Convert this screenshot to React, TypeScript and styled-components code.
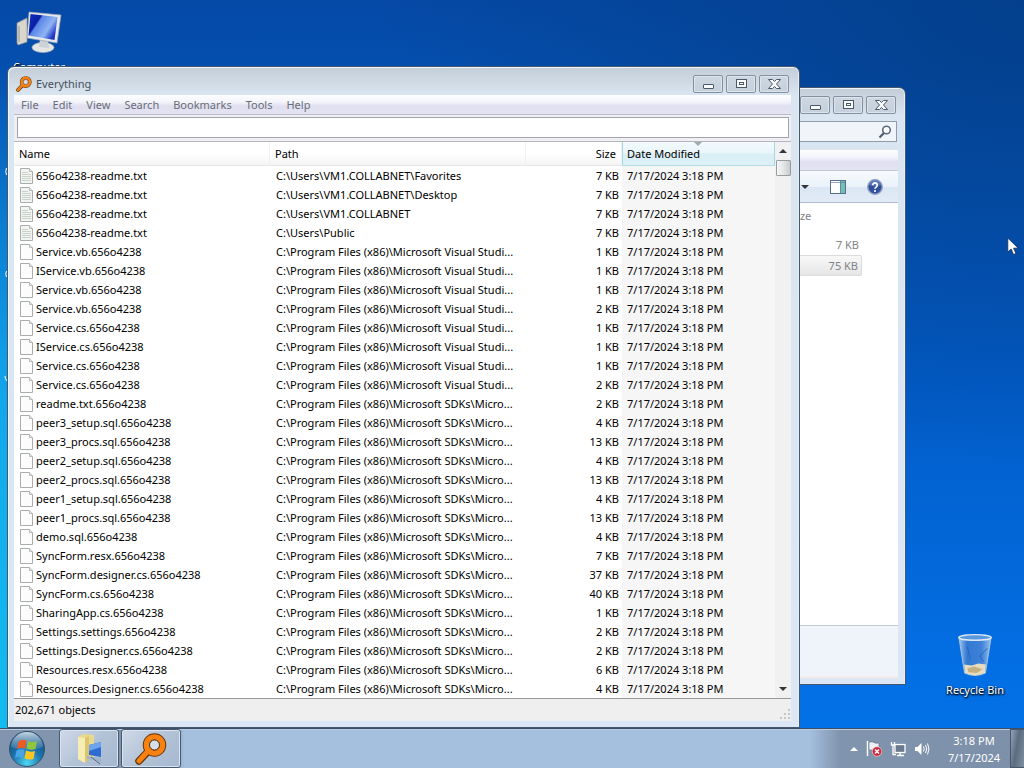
import React from "react";
import styled, { createGlobalStyle, css } from "styled-components";

const FONT = '"Noto Sans", "Open Sans", sans-serif';

const GlobalStyle = createGlobalStyle`
  *, *::before, *::after { box-sizing: border-box; }
  body {
    margin: 0;
    font: 11px/16px ${FONT};
    color: #000;
    background: #0560c8;
  }
  button, input { font: inherit; color: inherit; }
  button { border: 0; padding: 0; background: none; }
`;

/* ---------- desktop ---------- */

const Screen = styled.div`
  display: flex;
  flex-direction: column;
  height: 100vh;
  overflow: hidden;
`;

const Desktop = styled.main`
  position: relative;
  flex: 1;
  background:
    radial-gradient(ellipse 6% 90% at 0 100%, #12bdf0 0%, #12a8ec 50%, rgba(16, 150, 235, 0) 100%),
    radial-gradient(ellipse at 100% 0%, #033f8c 0%, rgba(3, 63, 140, 0) 45%),
    linear-gradient(180deg, #0549a6 0%, #0553b3 15%, #025bc6 50%, #036fe4 92%, #0270e6 100%);
`;

const Shortcut = styled.button<{ $x: string; $y: string }>`
  position: absolute;
  left: ${(p) => p.$x};
  top: ${(p) => p.$y};
  display: flex;
  flex-direction: column;
  align-items: center;
  width: 72px;
  gap: 2px;
  color: #fff;
  text-shadow: 0 1px 2px #000, 1px 1px 2px #000;
`;

const Specks = styled.svg`
  position: absolute;
  left: 3px;
  top: 165px;
`;

const Pointer = styled.svg`
  position: absolute;
  left: 1007px;
  top: 237px;
`;

/* ---------- window chrome ---------- */

const WindowFrame = styled.section`
  position: absolute;
  display: flex;
  flex-direction: column;
  border: 1px solid #46586c;
  border-radius: 7px 7px 0 0;
  padding: 0 7px 6px 6px;
  background: linear-gradient(180deg, #c4ced9 0, #ced9e4 14px, #d9e5f0 28px, #dbe7f5 100%);
  box-shadow: inset 1px 1px 0 #eef5fb, inset -1px 0 0 #e4eef8;
`;

const EverythingFrame = styled(WindowFrame)`
  left: 7px;
  right: 224px;
  top: 66px;
  padding-right: 8px;
`;

const ExplorerFrame = styled(WindowFrame)`
  left: 180px;
  right: 118px;
  top: 87px;
  bottom: 43px;
`;

const TitleBar = styled.header<{ $tall?: boolean }>`
  display: flex;
  align-items: center;
  gap: 4px;
  height: ${(p) => (p.$tall ? 32 : 28)}px;
  padding: ${(p) => (p.$tall ? 2 : 5)}px 2px 0 2px;
`;

const Title = styled.h1`
  flex: 1;
  margin: 0;
  font-size: 11px;
  font-weight: 400;
  color: #46505c;
`;

const Captions = styled.div`
  display: flex;
  gap: 3px;
`;

const CaptionButton = styled.button`
  display: grid;
  place-items: center;
  width: 30px;
  height: 18px;
  border: 1px solid #8290a2;
  border-radius: 2px;
  background: linear-gradient(180deg, #ced7e1, #c5d0dc);
  box-shadow: inset 0 0 0 1px #dce4ec;
`;

const Band = css`
  background: linear-gradient(180deg, #fdfdff 0, #f4f5fb 35%, #dfdff0 60%, #e4e3f2 100%);
`;

/* ---------- Everything ---------- */

const MenuBar = styled.nav`
  ${Band}
  display: flex;
  gap: 14px;
  height: 20px;
  padding: 1px 7px 0;
  border-bottom: 1px solid #bcbcc8;
`;

const MenuItem = styled.button`
  color: #6a6d78;
  line-height: 18px;
`;

const SearchStrip = styled.form`
  display: flex;
  padding: 2px 2px 3px 3px;
  background: #f0f0f4;
  border-bottom: 1px solid #b4b6bc;
`;

const SearchInput = styled.input`
  flex: 1;
  height: 21px;
  min-width: 0;
  border: 1px solid #a3a3b0;
  background: #fff;
  padding: 0 4px;
  outline: 0;
`;

const ListArea = styled.div`
  display: flex;
  background: #fff;
  border-bottom: 1px solid #96989c;
`;

const ResultTable = styled.table`
  flex: 1;
  table-layout: fixed;
  width: 100%;
  border-collapse: separate;
  border-spacing: 0;
`;

const Col = styled.col<{ $w?: number }>`
  width: ${(p) => (p.$w ? `${p.$w}px` : "auto")};
`;

const HeadCell = styled.th<{ $right?: boolean; $sorted?: boolean }>`
  position: relative;
  height: 24px;
  padding: 0 5px;
  font-weight: 400;
  text-align: ${(p) => (p.$right ? "right" : "left")};
  border-right: 1px solid ${(p) => (p.$sorted ? "#a8d6e2" : "#f0f1f2")};
  border-bottom: 1px solid ${(p) => (p.$sorted ? "#b4dde8" : "#e6e7ea")};
  background: ${(p) =>
    p.$sorted
      ? "linear-gradient(180deg, #f3fafc 0, #eaf6fa 45%, #d9eff5 55%, #dcf0f6 100%)"
      : "linear-gradient(180deg, #fff 50%, #f4f4f5 100%)"};
  ${(p) => p.$sorted && "box-shadow: inset 1px 0 0 #a8d6e2;"}
`;

const SortMark = styled.svg`
  position: absolute;
  left: 72px;
  top: 0;
`;

const Cell = styled.td<{ $right?: boolean; $sorted?: boolean }>`
  height: 19px;
  padding: 0 ${(p) => (p.$right ? 3 : 2)}px 0 ${(p) => (p.$sorted ? 5 : 6)}px;
  line-height: 18px;
  white-space: nowrap;
  text-align: ${(p) => (p.$right ? "right" : "left")};
  background: ${(p) => (p.$sorted ? "#f6f6f6" : "transparent")};
`;

const FileName = styled.div`
  display: flex;
  align-items: center;
  gap: 2px;
`;

const ScrollBar = styled.div`
  display: flex;
  flex-direction: column;
  width: 16px;
  background: #f1f1f2;
`;

const ScrollButton = styled.button`
  display: grid;
  place-items: center;
  height: 18px;
`;

const Thumb = styled.div`
  height: 16px;
  margin: 0 0 0 1px;
  border: 1px solid #999da2;
  border-radius: 1px;
  background: linear-gradient(90deg, #f6f6f6, #e4e5e6 50%, #c9cacc);
`;

const Track = styled.div`
  flex: 1;
`;

const StatusBar = styled.footer`
  display: flex;
  align-items: center;
  justify-content: space-between;
  height: 22px;
  padding: 0 1px;
  background: #f0eff0;
`;

/* ---------- Explorer ---------- */

const AddressBar = styled.div`
  display: flex;
  justify-content: flex-end;
  padding: 1px 1px 8px;
`;

const SearchBox = styled.label`
  display: flex;
  align-items: center;
  width: 180px;
  height: 21px;
  padding-right: 4px;
  border: 1px solid #8f9cab;
  background: #f1f5fa;
`;

const PlainInput = styled.input`
  flex: 1;
  min-width: 0;
  border: 0;
  outline: 0;
  background: transparent;
`;

const MenuBand = styled.div`
  ${Band}
  height: 21px;
  border-bottom: 1px solid #c3c7d3;
`;

const CommandBar = styled.div`
  display: flex;
  align-items: center;
  justify-content: flex-end;
  gap: 21px;
  height: 32px;
  padding-right: 15px;
  border-bottom: 1px solid #adbdd2;
  background: linear-gradient(180deg, #f8fbfe 0, #eaf1f9 50%, #dae6f3 52%, #e1ecf7 100%);
`;

const CommandButton = styled.button`
  display: grid;
  place-items: center;
`;

const FilePane = styled.div`
  flex: 1;
  background: #fff;
  padding-right: 36px;
`;

const FileTable = styled.table`
  width: 100%;
  table-layout: fixed;
  border-collapse: separate;
  border-spacing: 0;
  color: #808388;
`;

const FileHead = styled.th`
  height: 31px;
  padding: 0 0 5px 9px;
  font-weight: 400;
  text-align: left;
`;

const FileCell = styled.td<{ $selected?: boolean }>`
  height: 21px;
  padding: 0 3px;
  text-align: right;
  ${(p) =>
    p.$selected &&
    css`
      border: 1px solid #dcdcdc;
      border-left: 0;
      border-radius: 0 2px 2px 0;
      background: linear-gradient(180deg, #f8f8f8, #e6e6e6);
    `}
`;

const DetailsPane = styled.footer`
  height: 53px;
  border-top: 1px solid #c4cbd4;
  border-bottom: 2px solid #f7ebe9;
  background: #eff4fa;
`;

/* ---------- taskbar ---------- */

const Taskbar = styled.nav`
  display: flex;
  align-items: stretch;
  height: 40px;
  border-top: 1px solid #3c4f66;
  box-shadow: inset 0 1px 0 #b9cbde;
  background: linear-gradient(90deg, #8295ae 0, #8295ae 17%, #a5c0de 18%, #a5c0de 79%, #8094ae 82%, #7d90aa 100%);
`;

const StartButton = styled.button`
  display: grid;
  place-items: center;
  width: 54px;
  margin-right: 5px;
`;

const TaskButton = styled.button`
  display: grid;
  place-items: center;
  width: 60px;
  margin-right: 2px;
  border: 1px solid #48596f;
  border-radius: 3px;
  background: linear-gradient(135deg, #cfdae8 0, #b3c3d7 50%, #a5b8d0 100%);
  box-shadow: inset 0 0 0 1px #d9e4f0;
`;

const Tray = styled.div`
  display: flex;
  align-items: center;
  gap: 8px;
  margin-left: auto;
`;

const TrayButton = styled.button`
  display: grid;
  place-items: center;
`;

const Clock = styled.time`
  width: 72px;
  color: #fff;
  line-height: 17px;
  text-align: center;
  white-space: pre-line;
`;

const ShowDesktop = styled.button`
  width: 14px;
  border: 1px solid #46566b;
  border-right: 0;
  background: linear-gradient(100deg, #93a3b7 0, #5c6c80 45%, #7f8fa4 100%);
`;

/* ---------- drawings ---------- */

const ComputerIcon = () => (
  <svg width="48" height="46" viewBox="0 0 48 46" aria-hidden>
    <defs>
      <linearGradient id="monitor" x1="0" y1="0" x2="1" y2="0.6">
        <stop offset="0" stopColor="#0f2fc0" />
        <stop offset="0.35" stopColor="#0a1fa4" />
        <stop offset="0.4" stopColor="#5a86e6" />
        <stop offset="0.75" stopColor="#8fb4f4" />
        <stop offset="1" stopColor="#1c35c4" />
      </linearGradient>
    </defs>
    <path d="M2 12 12 7v24l-9 3-1-2z" fill="#d9d6cc" stroke="#8f9098" strokeWidth=".7" />
    <path d="M4 15v16" stroke="#9a988f" />
    <ellipse cx="28" cy="36.500" rx="11" ry="5" fill="#e4e6e6" stroke="#a8b0bb" strokeWidth=".7" />
    <path d="m25 28 8 1 1 8-10-1z" fill="#cdd2d6" />
    <path d="m14 1 32 3-4 28-30-5z" fill="#e6e9ec" stroke="#9aa3b3" strokeWidth=".7" />
    <path d="m15.500 3 27 3-3 23-26-4.500z" fill="url(#monitor)" />
  </svg>
);

const BinIcon = () => (
  <svg width="38" height="48" viewBox="0 0 40 48" aria-hidden>
    <defs>
      <linearGradient id="glass" x1="0" y1="0" x2="1" y2="0">
        <stop offset="0" stopColor="#b9d6f2" stopOpacity=".9" />
        <stop offset=".25" stopColor="#3f7cce" stopOpacity=".8" />
        <stop offset=".7" stopColor="#4c86d6" stopOpacity=".8" />
        <stop offset="1" stopColor="#a9cdf0" stopOpacity=".9" />
      </linearGradient>
    </defs>
    <path d="M3 4 9 42q11 5 22 0L37 4z" fill="url(#glass)" stroke="#a9c4e2" />
    <path d="m8.500 33 1 9q10.500 5 21 0l1-9-8-1-7 2z" fill="#e6dcc0" />
    <path d="m12 37 7-2 9 3-6 4-9-1z" fill="#c4b183" />
    <ellipse cx="20" cy="4.500" rx="17" ry="3" fill="#5a97dd" stroke="#dbe8f5" strokeWidth="1.500" />
    <path d="m33 16-8 8 4 6M12 14l3 14" fill="none" stroke="#2c62b4" />
  </svg>
);

const Loupe = ({ size }: { size: number }) => (
  <svg width={size} height={size} viewBox="0 0 32 32" aria-hidden>
    <path d="m4 28 9.500-10" stroke="#5e3208" strokeWidth="7.500" strokeLinecap="round" />
    <circle cx="19.500" cy="12" r="8.500" fill="none" stroke="#5e3208" strokeWidth="6.500" />
    <path d="m4 28 10-11" stroke="#f98112" strokeWidth="5" strokeLinecap="round" />
    <circle cx="19.500" cy="12" r="8.200" fill="none" stroke="#f98112" strokeWidth="5.200" />
    <circle cx="19.500" cy="12" r="5" fill="#d5dfea" stroke="#5e3208" />
  </svg>
);

const FileIcon = ({ lined }: { lined?: boolean }) => (
  <svg width="14" height="16" viewBox="0 0 14 16" aria-hidden>
    <path d="M.5.5h9l3 3v12H.5z" fill={lined ? "#f1f4f1" : "#fcfcfc"} stroke="#aaadad" />
    <path d="M9.500.5v3h3" fill="#e7e9e9" stroke="#b8bbbb" />
    {lined && <path d="M2 4.500h6M2 6.500h9M2 8.500h9M2 10.500h9M2 12.500h9" stroke="#c9d3ca" />}
  </svg>
);

const glyphs = {
  Minimize: <rect x="3.500" y="7.500" width="10" height="4" rx=".5" fill="#f7f9fb" stroke="#4b5868" />,
  Maximize: (
    <>
      <rect x="3.500" y="2.500" width="10" height="8" fill="#f7f9fb" stroke="#4b5868" />
      <rect x="6.500" y="5.500" width="4" height="2" fill="#f7f9fb" stroke="#4b5868" />
    </>
  ),
  Close: (
    <path
      d="M2.500 2.500h4l2 2 2-2h4l-4 4.500 4 4.500h-4l-2-2-2 2h-4l4-4.500z"
      fill="#f7f9fb"
      stroke="#4b5868"
    />
  ),
};

const CaptionButtons = () => (
  <Captions>
    {(Object.keys(glyphs) as (keyof typeof glyphs)[]).map((name) => (
      <CaptionButton key={name} aria-label={name}>
        <svg width="17" height="14" viewBox="0 0 17 14" aria-hidden>
          {glyphs[name]}
        </svg>
      </CaptionButton>
    ))}
  </Captions>
);

const Arrow = ({ up }: { up?: boolean }) => (
  <svg width="8" height="4" viewBox="0 0 8 4" aria-hidden>
    <path d={up ? "M0 4 4 0l4 4z" : "M0 0h8L4 4z"} fill="#32363c" />
  </svg>
);

const MagnifierIcon = () => (
  <svg width="14" height="14" viewBox="0 0 14 14" aria-hidden>
    <circle cx="8.500" cy="5" r="3.800" fill="#fff" stroke="#5b6c80" strokeWidth="1.600" />
    <path d="M6 8 1.500 12.500" stroke="#4b5c70" strokeWidth="2.200" />
  </svg>
);

const PreviewIcon = () => (
  <svg width="16" height="14" viewBox="0 0 16 14" aria-hidden>
    <rect x=".5" y=".5" width="15" height="13" fill="#fff" stroke="#56708a" />
    <rect x="10" y="1" width="5" height="12" fill="#74bdb9" />
    <path d="M10.500 1v12M1 2.500h14" stroke="#56708a" strokeOpacity=".6" />
  </svg>
);

const HelpIcon = () => (
  <svg width="16" height="16" viewBox="0 0 16 16" aria-hidden>
    <circle cx="8" cy="8" r="7.200" fill="#2f4f9e" stroke="#8a99ba" strokeWidth="1.400" />
    <path d="M2 6a6 5 0 0 1 12 0q-6 2-12 0" fill="#6d89c8" opacity=".7" />
    <path d="M5.700 6.200a2.300 2.200 0 1 1 3.600 1.700Q8 8.600 8 9.800" fill="none" stroke="#fff" strokeWidth="1.700" />
    <circle cx="8" cy="12" r="1.100" fill="#fff" />
  </svg>
);

const StartOrb = () => (
  <svg width="38" height="38" viewBox="0 0 38 38" aria-hidden>
    <defs>
      <radialGradient id="orb" cx=".5" cy=".9" r=".9">
        <stop offset="0" stopColor="#4fd6f0" />
        <stop offset=".45" stopColor="#1c76b0" />
        <stop offset="1" stopColor="#123f70" />
      </radialGradient>
      <linearGradient id="orbShine" x1="0" y1="0" x2="0" y2="1">
        <stop offset="0" stopColor="#e6f1f8" stopOpacity=".85" />
        <stop offset="1" stopColor="#9cc4dc" stopOpacity=".15" />
      </linearGradient>
    </defs>
    <circle cx="19" cy="19" r="17.500" fill="url(#orb)" stroke="#37536f" />
    <path d="M3 17a16 15 0 0 1 32 0q-16 6-32 0z" fill="url(#orbShine)" />
    <path d="M10.500 11.500q4-3 8-1l-1.500 8q-4-1.500-8 .5z" fill="#ee5a24" />
    <path d="M20 11q4 2 9 0l-1.500 8q-5 1.500-9-.5z" fill="#90c53d" />
    <path d="M8.500 20.500q4-2 8-.5L15 27.500q-4-1.500-8 .5z" fill="#4aa5e8" />
    <path d="M18 20.500q4 2 9 .5L25.500 29q-5 1.500-9-.8z" fill="#fcc523" />
  </svg>
);

const FolderIcon = () => (
  <svg width="30" height="32" viewBox="0 0 30 32" aria-hidden>
    <path d="M4 4 9 1l11 1v22L9 29l-5-3z" fill="#e9d98e" />
    <path d="M4 4l7 1v25l-7-4z" fill="#f6ecb4" />
    <path d="m11 5 4-2v23l-4 4z" fill="#dcc56f" />
    <path d="m15 12 12-3v15l-12-2z" fill="#2f6bd0" />
    <path d="m15 12 12-3v5l-12 4z" fill="#6ea3ee" />
    <path d="m13 23 14 2v6l-5-4-9-1z" fill="#9fb4cb" />
    <path d="m17 24 9 7" stroke="#54687f" />
  </svg>
);

const FlagIcon = () => (
  <svg width="16" height="17" viewBox="0 0 16 17" aria-hidden>
    <path d="M1.500 1v15" stroke="#fff" strokeWidth="1.500" />
    <path d="M3 2h4q2 2 6 1v7H3z" fill="#eef1f5" stroke="#5f6d80" strokeWidth=".6" />
    <circle cx="11" cy="11.500" r="4.800" fill="#d0283b" stroke="#f3d7da" strokeWidth=".7" />
    <path d="m9 9.500 4 4m0-4-4 4" stroke="#fff" strokeWidth="1.500" />
  </svg>
);

const NetworkIcon = () => (
  <svg width="16" height="16" viewBox="0 0 16 16" aria-hidden>
    <rect x="5" y="3.500" width="10" height="8" fill="#6a7b90" stroke="#fff" strokeWidth="1.300" />
    <path d="M7 14.500h7M10 12v2" stroke="#fff" strokeWidth="1.400" />
    <path d="M1.500 1v3h3V1M3 4v9.500h3" fill="none" stroke="#fff" strokeWidth="1.300" />
  </svg>
);

const SpeakerIcon = () => (
  <svg width="16" height="14" viewBox="0 0 16 14" aria-hidden>
    <path d="M1 5h2.500L7.500 1v12l-4-4H1z" fill="#fff" />
    <path d="M9.500 4.500q1.500 2.500 0 5M11.500 3q2.500 4 0 8M13.500 1.500q3 5.500 0 11" fill="none" stroke="#fff" />
  </svg>
);

/* ---------- data ---------- */

const VS = "C:\\Program Files (x86)\\Microsoft Visual Studi...";
const SDK = "C:\\Program Files (x86)\\Microsoft SDKs\\Micro...";
const MODIFIED = "7/17/2024 3:18 PM";

const files: [string, string, number][] = [
  ["656o4238-readme.txt", "C:\\Users\\VM1.COLLABNET\\Favorites", 7],
  ["656o4238-readme.txt", "C:\\Users\\VM1.COLLABNET\\Desktop", 7],
  ["656o4238-readme.txt", "C:\\Users\\VM1.COLLABNET", 7],
  ["656o4238-readme.txt", "C:\\Users\\Public", 7],
  ["Service.vb.656o4238", VS, 1],
  ["IService.vb.656o4238", VS, 1],
  ["Service.vb.656o4238", VS, 1],
  ["Service.vb.656o4238", VS, 2],
  ["Service.cs.656o4238", VS, 1],
  ["IService.cs.656o4238", VS, 1],
  ["Service.cs.656o4238", VS, 1],
  ["Service.cs.656o4238", VS, 2],
  ["readme.txt.656o4238", SDK, 2],
  ["peer3_setup.sql.656o4238", SDK, 4],
  ["peer3_procs.sql.656o4238", SDK, 13],
  ["peer2_setup.sql.656o4238", SDK, 4],
  ["peer2_procs.sql.656o4238", SDK, 13],
  ["peer1_setup.sql.656o4238", SDK, 4],
  ["peer1_procs.sql.656o4238", SDK, 13],
  ["demo.sql.656o4238", SDK, 4],
  ["SyncForm.resx.656o4238", SDK, 7],
  ["SyncForm.designer.cs.656o4238", SDK, 37],
  ["SyncForm.cs.656o4238", SDK, 40],
  ["SharingApp.cs.656o4238", SDK, 1],
  ["Settings.settings.656o4238", SDK, 2],
  ["Settings.Designer.cs.656o4238", SDK, 2],
  ["Resources.resx.656o4238", SDK, 6],
  ["Resources.Designer.cs.656o4238", SDK, 4],
];

const menus = ["File", "Edit", "View", "Search", "Bookmarks", "Tools", "Help"];

/* ---------- windows ---------- */

const ExplorerWindow = () => (
  <ExplorerFrame aria-label="File explorer">
    <TitleBar $tall>
      <Title />
      <CaptionButtons />
    </TitleBar>
    <AddressBar>
      <SearchBox>
        <PlainInput type="search" aria-label="Search folder" />
        <MagnifierIcon />
      </SearchBox>
    </AddressBar>
    <MenuBand />
    <CommandBar>
      <CommandButton aria-label="More views">
        <Arrow />
      </CommandButton>
      <CommandButton aria-label="Preview pane">
        <PreviewIcon />
      </CommandButton>
      <CommandButton aria-label="Help">
        <HelpIcon />
      </CommandButton>
    </CommandBar>
    <FilePane>
      <FileTable>
        <colgroup>
          <Col />
          <Col $w={80} />
        </colgroup>
        <thead>
          <tr>
            <td />
            <FileHead scope="col">Size</FileHead>
          </tr>
        </thead>
        <tbody>
          <tr>
            <td />
            <FileCell>7 KB</FileCell>
          </tr>
          <tr>
            <td />
            <FileCell $selected>75 KB</FileCell>
          </tr>
        </tbody>
      </FileTable>
    </FilePane>
    <DetailsPane />
  </ExplorerFrame>
);

const EverythingWindow = () => (
  <EverythingFrame aria-label="Everything">
    <TitleBar>
      <Loupe size={16} />
      <Title>Everything</Title>
      <CaptionButtons />
    </TitleBar>
    <MenuBar>
      {menus.map((m) => (
        <MenuItem key={m}>{m}</MenuItem>
      ))}
    </MenuBar>
    <SearchStrip>
      <SearchInput type="text" aria-label="Search files" />
    </SearchStrip>
    <ListArea>
      <ResultTable>
        <colgroup>
          <Col $w={256} />
          <Col $w={256} />
          <Col $w={96} />
          <Col />
        </colgroup>
        <thead>
          <tr>
            <HeadCell scope="col">Name</HeadCell>
            <HeadCell scope="col">Path</HeadCell>
            <HeadCell scope="col" $right>
              Size
            </HeadCell>
            <HeadCell scope="col" $sorted>
              Date Modified
              <SortMark width="8" height="4" viewBox="0 0 8 4" aria-hidden>
                <path d="M0 0h8L4 4z" fill="#9aacb4" />
              </SortMark>
            </HeadCell>
          </tr>
        </thead>
        <tbody>
          {files.map(([name, path, size], i) => (
            <tr key={i}>
              <Cell>
                <FileName>
                  <FileIcon lined={name.endsWith(".txt")} />
                  {name}
                </FileName>
              </Cell>
              <Cell>{path}</Cell>
              <Cell $right>{size} KB</Cell>
              <Cell $sorted>{MODIFIED}</Cell>
            </tr>
          ))}
        </tbody>
      </ResultTable>
      <ScrollBar>
        <ScrollButton aria-label="Scroll up">
          <Arrow up />
        </ScrollButton>
        <Thumb />
        <Track />
        <ScrollButton aria-label="Scroll down">
          <Arrow />
        </ScrollButton>
      </ScrollBar>
    </ListArea>
    <StatusBar>
      <span>202,671 objects</span>
      <svg width="10" height="18" viewBox="0 0 10 18" aria-hidden>
        <path d="M8 8h2v2H8zM8 12h2v2H8zM4 12h2v2H4zM8 16h2v2H8zM4 16h2v2H4zM0 16h2v2H0z" fill="#c6c6c8" />
      </svg>
    </StatusBar>
  </EverythingFrame>
);

export default function App() {
  return (
    <>
      <GlobalStyle />
      <Screen>
        <Desktop>
          <Shortcut $x="3px" $y="11px">
            <ComputerIcon />
            Computer
          </Shortcut>
          <Shortcut $x="calc(100% - 85px)" $y="632px">
            <BinIcon />
            Recycle Bin
          </Shortcut>
          <Specks width="4" height="220" viewBox="0 0 4 220" aria-hidden>
            <path d="M3.500 3q-1.500 3.500 0 7M3.500 106q-1.500 3 0 6M2 211q0 3 2 5" fill="none" stroke="#fff" />
          </Specks>
          <ExplorerWindow />
          <EverythingWindow />
          <Pointer width="13" height="19" viewBox="0 0 13 19" aria-hidden>
            <path d="M.8 1v14l3.300-3 2.400 5.500 2.500-1-2.400-5.300h4.600z" fill="#fff" stroke="#1c2f55" strokeWidth=".8" />
          </Pointer>
        </Desktop>
        <Taskbar>
          <StartButton aria-label="Start">
            <StartOrb />
          </StartButton>
          <TaskButton aria-label="File explorer">
            <FolderIcon />
          </TaskButton>
          <TaskButton aria-label="Everything">
            <Loupe size={32} />
          </TaskButton>
          <Tray>
            <TrayButton aria-label="Show hidden icons">
              <svg width="8" height="4" viewBox="0 0 8 4" aria-hidden>
                <path d="M0 4 4 0l4 4z" fill="#fff" />
              </svg>
            </TrayButton>
            <TrayButton aria-label="Action center">
              <FlagIcon />
            </TrayButton>
            <TrayButton aria-label="Network">
              <NetworkIcon />
            </TrayButton>
            <TrayButton aria-label="Volume">
              <SpeakerIcon />
            </TrayButton>
            <Clock>{"3:18 PM\n7/17/2024"}</Clock>
          </Tray>
          <ShowDesktop aria-label="Show desktop" />
        </Taskbar>
      </Screen>
    </>
  );
}
